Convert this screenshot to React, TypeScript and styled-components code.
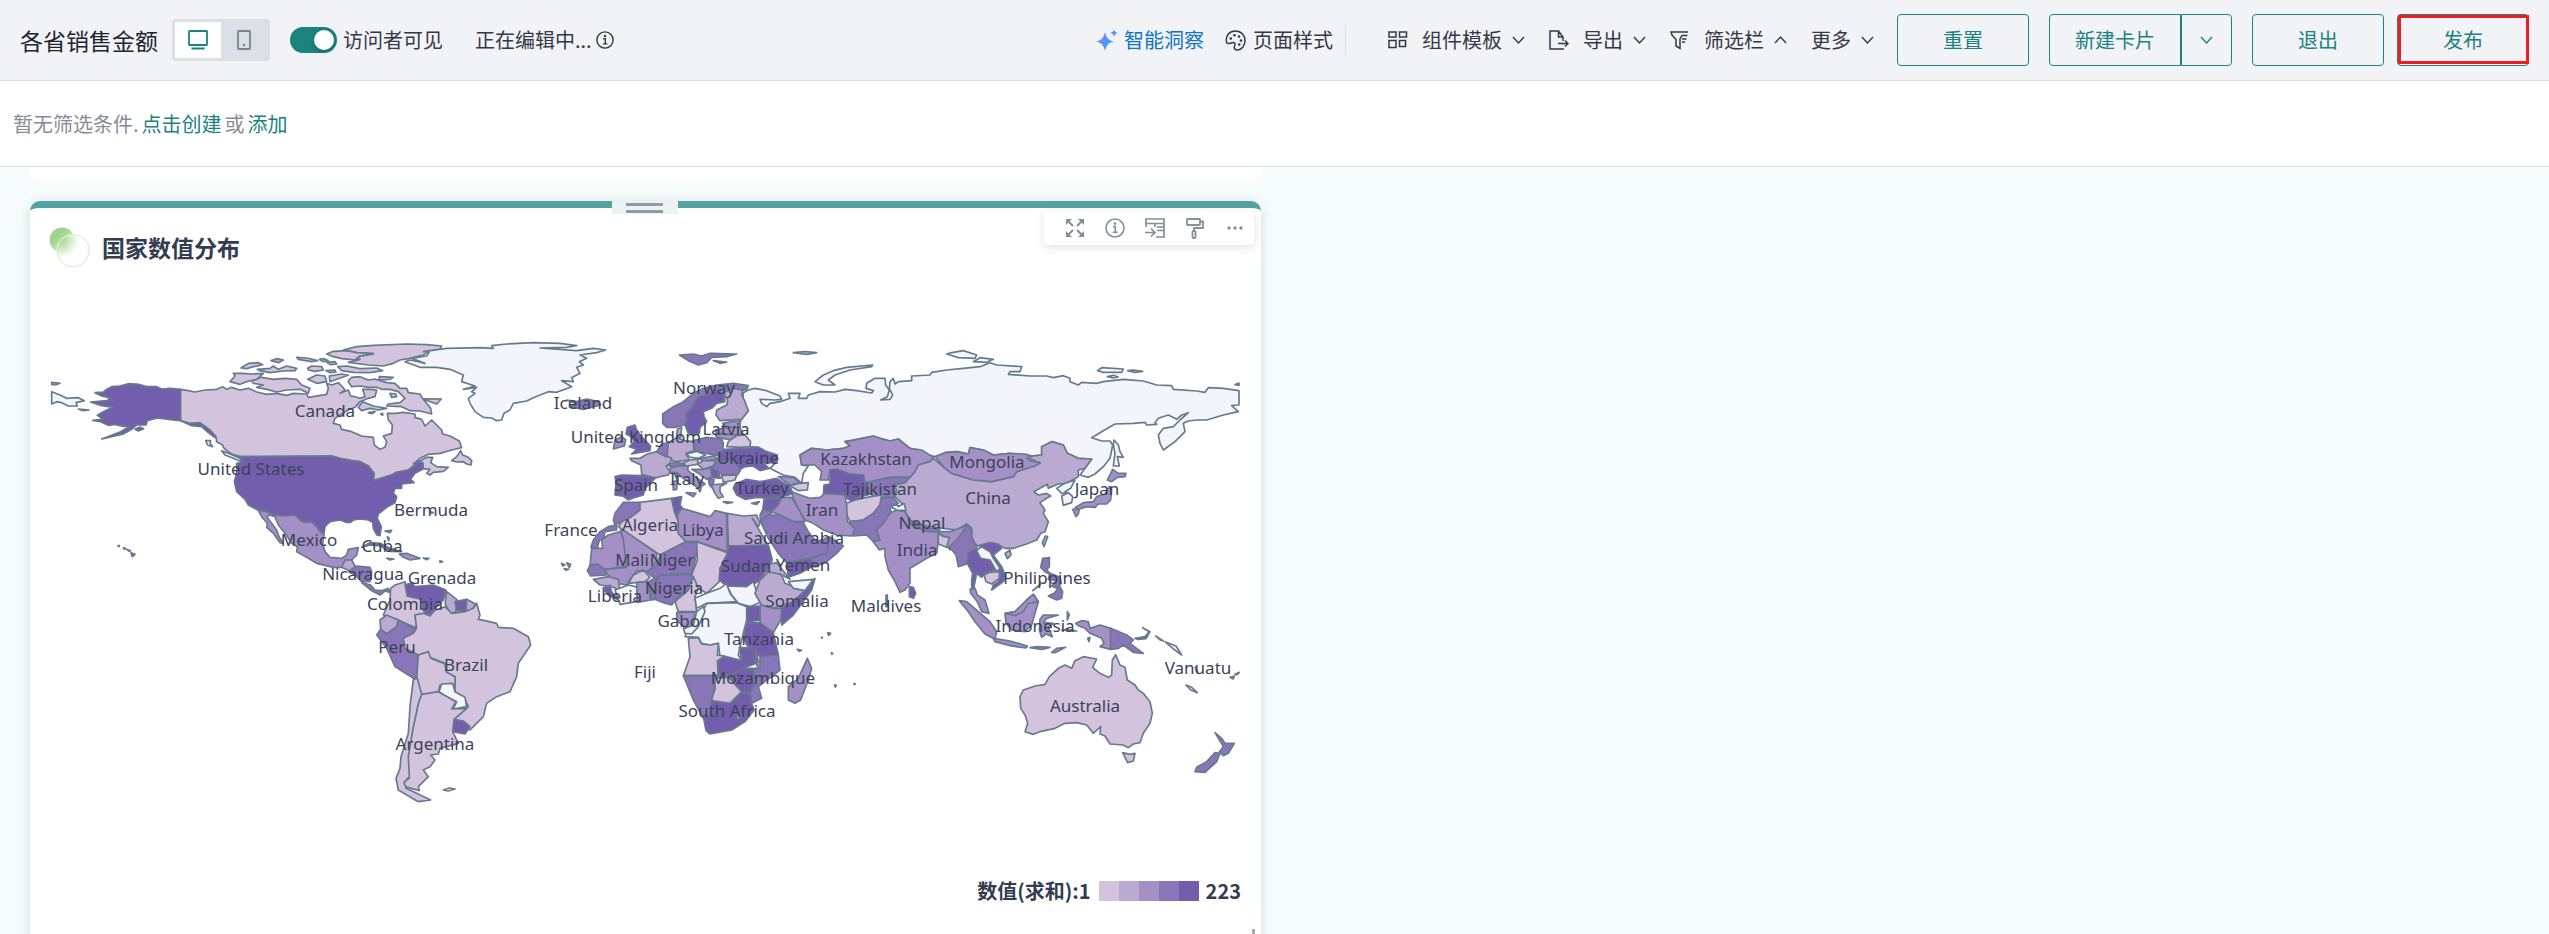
import React from "react";
import styled, { createGlobalStyle } from "styled-components";

const teal = "#1b827d";
const ink = "#343c50";
const iconGray = "#868d9b";

const GlobalStyle = createGlobalStyle`
  * { box-sizing: border-box; }
  body {
    margin: 0;
    color: #343a45;
    font-family: "Noto Sans CJK SC", "Noto Sans", sans-serif;
    font-size: 20px;
    line-height: 30px;
  }
  button, input { font: inherit; }
  h1, h2, p { margin: 0; }
  svg { display: block; flex: none; }
`;

const Page = styled.div`
  display: flex;
  flex-direction: column;
  height: 100vh;
  overflow: hidden;
`;

const Header = styled.header`
  display: flex;
  align-items: center;
  flex: none;
  height: 81px;
  padding: 0 20px;
  background: #f2f3f7;
  border-bottom: 1px solid #dadde3;
  white-space: nowrap;
`;

const PageTitle = styled.h1`
  font-size: 23px;
  font-weight: 400;
  color: #20242c;
`;

const DeviceSwitch = styled.div`
  display: flex;
  margin: 0 20px 0 14px;
  padding: 3px;
  border-radius: 3px;
  background: #dcdfe5;
`;

const DeviceButton = styled.button<{ $active?: boolean }>`
  display: grid;
  place-items: center;
  width: 46px;
  height: 36px;
  padding: 0;
  border: 0;
  border-radius: 2px;
  color: ${(p) => (p.$active ? teal : "#7c828e")};
  background: ${(p) => (p.$active ? "#fff" : "transparent")};
`;

const SwitchLabel = styled.label`
  display: flex;
  align-items: center;
  gap: 6px;
  margin-right: 32px;
`;

const Toggle = styled.input`
  appearance: none;
  display: flex;
  width: 47px;
  height: 26px;
  margin: 0;
  padding: 3px;
  border-radius: 13px;
  background: #a9adb5;
  &::before {
    content: "";
    width: 20px;
    height: 20px;
    border-radius: 50%;
    background: #fff;
    box-shadow: 0 2px 4px rgba(0, 35, 11, 0.2);
  }
  &:checked { background: ${teal}; justify-content: flex-end; }
`;

const Status = styled.p`
  display: flex;
  align-items: center;
  gap: 4px;
`;

const Tools = styled.nav`
  display: flex;
  align-items: center;
  gap: 24px;
  margin-right: 23px;
`;

const QuickTools = styled.div`
  display: flex;
  align-items: center;
  gap: 21px;
  margin-left: auto;
  margin-right: 42px;
  padding-right: 12px;
  height: 30px;
  border-right: 1px solid #dadde3;
`;

const ToolButton = styled.button<{ $gap: number; $blue?: boolean }>`
  display: flex;
  align-items: center;
  gap: ${(p) => p.$gap}px;
  padding: 0;
  border: 0;
  background: none;
  color: ${(p) => (p.$blue ? "#1273c8" : "#343a45")};
`;

const ToolText = styled.span`
  display: flex;
  align-items: center;
  gap: 10px;
`;

const Actions = styled.div`
  display: flex;
  gap: 20px;
`;

const ActionPair = styled.div`
  display: flex;
  gap: 13px;
`;

const SplitButton = styled.div`
  display: flex;
  & > button:first-child { border-radius: 4px 0 0 4px; }
  & > button:last-child { border-radius: 0 4px 4px 0; }
`;

const ActionButton = styled.button<{ $narrow?: boolean; $marked?: boolean }>`
  position: relative;
  display: grid;
  place-items: center;
  width: ${(p) => (p.$narrow ? 51 : 132)}px;
  height: 52px;
  padding: 0;
  border: 1px solid ${teal};
  border-radius: 4px;
  background: transparent;
  color: ${teal};
  &::after {
    content: "";
    display: ${(p) => (p.$marked ? "block" : "none")};
    position: absolute;
    inset: 0 -1px 1px 0;
    border: 3px solid #f31b24;
  }
`;

const FilterBar = styled.div`
  display: flex;
  align-items: center;
  gap: 3px;
  flex: none;
  height: 86px;
  padding: 0 13px;
  background: #fff;
  border-bottom: 1px solid #dadde3;
  color: #868c97;
`;

const FilterLink = styled.a`
  color: ${teal};
  text-decoration: none;
`;

const Canvas = styled.main`
  flex: 1;
  display: grid;
  grid-template-columns: 1fr 1fr;
  grid-template-rows: 14px auto;
  gap: 20px 27px;
  padding: 0 30px;
  overflow: hidden;
  background: #f5fcfb;
`;

const CardTail = styled.div`
  grid-column: 1;
  background: #fff;
  border-radius: 0 0 10px 10px;
`;

const Card = styled.section`
  grid-column: 1;
  position: relative;
  padding: 0 20px 20px;
  border-top: 7px solid #55a39f;
  border-radius: 10px 10px 0 0;
  background: #fff;
  box-shadow: 0 2px 12px rgba(60, 90, 90, 0.18);
`;

const DragHandle = styled.div`
  position: absolute;
  top: -7px;
  left: calc(50% - 34px);
  display: flex;
  flex-direction: column;
  align-items: center;
  justify-content: center;
  gap: 4px;
  width: 66px;
  height: 13px;
  background: #ecf3f3;
  &::before, &::after {
    content: "";
    width: 37px;
    height: 3px;
    background: #9399a6;
  }
`;

const CardTools = styled.div`
  position: absolute;
  top: 3px;
  right: 7px;
  display: flex;
  align-items: center;
  gap: 18px;
  height: 34px;
  padding: 0 8px 0 20px;
  border-radius: 3px;
  background: #fff;
  box-shadow: 0 2px 8px rgba(30, 40, 60, 0.14);
`;

const IconButton = styled.button`
  display: grid;
  place-items: center;
  width: 22px;
  height: 22px;
  padding: 0;
  border: 0;
  background: none;
  color: ${iconGray};
`;

const CardHeader = styled.div`
  display: flex;
  align-items: center;
  gap: 12px;
  height: 40px;
  margin-top: 19px;
`;

const CardTitle = styled.h2`
  font-size: 23px;
  font-weight: 700;
  color: ${ink};
`;

const MapFigure = styled.figure`
  margin: 63px 0 0;
  & > svg { width: 100%; height: auto; }
`;

const MapLabel = styled.text`
  font-family: "Noto Sans", sans-serif;
  font-size: 17px;
  fill: #3c4358;
  text-anchor: middle;
`;

const Legend = styled.div`
  display: flex;
  align-items: center;
  justify-content: flex-end;
  height: 20px;
  margin-top: 61px;
  font-weight: 700;
  color: ${ink};
`;

const Swatches = styled.div`
  display: flex;
  margin: 0 7px 0 8px;
`;

const Swatch = styled.span<{ $color: string }>`
  width: 20px;
  height: 20px;
  background: ${(p) => p.$color};
`;

const ResizeGrip = styled.div`
  width: 3px;
  height: 12px;
  margin: 28px -14px 0 auto;
  background: #a5a9b0;
`;

const Chevron = ({ up }: { up?: boolean }) => (
  <svg width="13" height="14" viewBox="0 0 13 14" fill="none" stroke="currentColor" strokeWidth="1.4">
    <path d={up ? "M1 10l5.5-6L12 10" : "M1 4l5.5 6L12 4"} />
  </svg>
);

const InfoIcon = ({ size }: { size: number }) => (
  <svg width={size} height={size} viewBox="0 0 20 20" fill="none" stroke="currentColor" strokeWidth="1.6">
    <circle cx="10" cy="10" r="9" />
    <path d="M8 8.6h2.3V14M7.7 14.3h5" />
    <circle cx="10" cy="5.6" r="0.6" fill="currentColor" />
  </svg>
);

const TONES: Record<string, string> = {
  n: "#f3f5fa",
  1: "#d3c3dc",
  2: "#baa9d0",
  3: "#a490c6",
  4: "#8976b9",
  5: "#735eae",
};

type Region = { origin: [number, number]; shapes: [string, string][] };

// Outlines are stored at three units per map pixel, relative to each region's origin.
const REGIONS: Region[] = [
  {
    // Eurasia
    origin: [830, 340],
    shapes: [
      ["n", "-245,150 -225,145 -190,152 -150,168 -145,178 -165,180 -210,178 -205,190 -190,200 -180,190 -150,185 -120,175 -125,160 -90,160 -95,175 -70,175 -65,165 -30,155 15,156 45,148 80,152 125,159 130,152 108,145 110,130 135,115 165,115 167,135 178,150 172,170 152,180 180,178 188,165 178,145 180,125 190,115 195,132 205,125 245,122 245,108 300,105 305,97 350,90 400,85 450,80 480,68 500,75 575,80 570,95 540,95 535,103 600,108 650,108 670,113 700,107 720,115 720,125 745,135 755,127 800,130 820,125 880,118 940,123 980,135 1025,137 1030,148 1100,153 1125,157 1135,143 1180,145 1227,152 1227,195 1205,197 1225,215 1180,225 1130,240 1100,240 1075,243 1060,250 1065,275 1050,290 1035,305 1000,330 990,310 985,285 1000,265 1030,260 1050,240 1075,218 1055,225 1040,238 1015,225 985,235 975,248 980,253 950,255 945,247 910,250 855,252 820,272 785,293 815,303 840,303 848,315 840,355 820,380 795,402 775,412 750,405 765,385 785,357 745,355 712,340 700,315 665,305 635,320 635,345 590,350 540,340 490,345 460,330 420,323 415,342 380,335 345,338 315,350 275,340 240,325 205,297 180,303 150,295 130,288 45,305 60,318 40,325 -10,330 -55,325 -90,345 -85,375 -65,378 -80,400 -85,430 -105,412 -140,405 -160,395 -180,385 -160,365 -165,345 -195,335 -215,322 -240,320 -240,305 -260,283 -270,270 -270,243 -245,212 -262,185 -260,158"],
      ["n", "-45,125 -20,105 10,92 50,82 128,75 125,80 60,90 15,105 -5,120 15,135 -20,135"],
      ["n", "350,42 365,38 400,32 440,45 435,55 385,53"],
      ["n", "430,65 450,53 490,58 470,67"],
      ["n", "803,92 815,83 880,87 875,97 820,97"],
      ["n", "893,92 910,90 938,94 915,97"],
      ["n", "832,110 850,106 865,111 850,114"],
      ["n", "1215,134 1227,129 1227,136"],
      ["n", "852,300 865,315 870,335 880,352 862,350 868,378 850,378 855,340 850,315"],
      ["3", "-90,345 -55,325 -10,330 40,325 60,318 45,305 75,300 130,288 150,295 180,303 205,297 240,325 275,330 310,352 300,365 265,375 255,395 240,412 180,412 150,420 130,428 105,435 100,405 60,402 20,388 0,390 -5,420 -30,420 -25,395 -45,375 -85,375"],
      ["5", "0,390 20,388 60,402 100,405 105,428 150,420 150,440 130,460 90,470 70,485 50,475 40,462 -20,468 -18,435 0,432"],
      ["4", "105,430 150,418 180,412 240,412 225,428 190,437 200,470 150,475 125,465"],
      ["1", "50,490 75,480 110,472 155,465 150,495 130,520 100,540 60,545 48,520"],
      ["4", "60,545 100,540 130,520 150,495 155,475 190,472 205,490 180,505 185,520 160,550 145,565 150,600 130,605 110,585 70,588 65,570"],
      ["2", "310,355 345,385 365,400 430,420 485,425 550,410 560,395 605,375 630,370 590,350 635,345 635,320 665,305 700,315 712,340 745,355 785,357 765,385 745,390 745,410 710,430 685,432 655,445 652,433 630,445 612,455 625,465 650,460 662,468 645,478 630,488 645,510 640,520 655,545 645,575 632,580 620,600 590,612 550,625 525,625 500,612 480,608 450,620 435,612 425,590 425,565 410,552 380,570 340,565 290,558 240,540 222,510 215,490 195,470 200,450 190,437 225,428 240,412 255,395 265,375 300,365"],
      ["3", "315,350 345,338 380,335 415,342 420,323 460,330 490,345 540,340 590,343 605,348 590,355 600,362 630,368 615,378 560,395 550,410 485,425 430,420 365,400 345,385"],
      ["3", "200,510 225,515 240,545 290,570 330,575 360,575 415,555 420,570 390,590 370,610 360,630 345,610 345,590 325,580 325,605 320,640 290,655 262,672 240,685 240,730 225,750 210,757 195,725 175,690 165,650 165,625 148,630 130,605 150,600 140,570 160,550 180,520"],
      ["n", "182,500 200,492 205,500 222,490 228,512 200,510"],
      ["1", "325,580 340,590 358,592 350,622 325,612"],
      ["4", "235,540 290,562 330,570 325,576 290,574 245,555"],
      ["5", "238,740 250,742 257,760 250,775 238,770"],
      ["5", "168,765 172,765 172,800 168,800"],
      ["2", "525,640 540,630 543,645 532,656"],
      ["2", "637,608 646,588 653,590 642,620"],
      ["4", "410,555 425,570 425,590 435,612 442,625 415,640 415,660 410,672 385,680 378,645 358,620 380,600 395,580"],
      ["5", "415,640 435,628 455,650 480,655 495,690 465,700 455,712 440,700 432,740 440,765 425,750 425,720 428,700 412,670"],
      ["5", "450,615 480,608 505,612 515,625 490,645 515,680 527,710 520,725 485,750 490,735 505,725 510,695 490,655 475,635"],
      ["n", "440,632 455,620 480,635 490,655 510,685 500,695 480,660 452,655"],
      ["1", "462,705 480,697 508,695 508,715 485,732 468,725"],
      ["n", "680,445 700,432 735,420 722,445 705,455 715,460 695,460"],
      ["n", "695,468 715,458 728,470 725,488 700,496"],
      ["3", "838,440 845,450 842,480 830,492 805,492 795,502 770,500 745,508 735,503 760,488 790,485 800,470 825,462"],
      ["3", "832,420 848,388 865,400 888,400 885,410 862,412 845,425"],
      ["3", "728,508 748,508 745,522 738,530"],
      ["4", "638,655 658,653 658,680 650,690 665,705 645,695 632,682"],
      ["4", "672,760 690,740 698,755 695,775 680,780 655,768"],
      ["n", "608,752 632,732 625,740"],
      ["4", "660,700 690,712 694,730 680,745 665,738 680,722 655,718"],
    ],
  },
  {
    // Europe and the Middle East
    origin: [560, 340],
    shapes: [
      ["4", "358,45 400,42 425,48 450,40 530,42 500,50 455,52 440,68 415,75 385,62"],
      ["4", "460,62 500,66 480,70"],
      ["n", "700,38 735,35 770,38 740,43"],
      ["4", "308,222 340,200 370,185 400,160 430,145 470,135 520,130 565,137 560,148 545,152 525,145 500,155 470,150 440,165 415,172 395,205 378,220 380,240 372,255 345,262 320,262 308,250"],
      ["5", "470,150 490,160 495,185 470,190 455,205 430,215 432,230 440,245 420,262 418,280 400,283 385,280 375,255 380,240 378,220 395,205 415,170 440,165"],
      ["2", "490,158 520,145 548,150 545,165 555,185 565,212 545,238 480,242 468,225 470,210 500,195 503,182"],
      ["3", "488,250 515,245 542,243 538,262 500,262"],
      ["3", "465,270 500,262 540,262 548,285 470,280"],
      ["3", "465,282 545,285 515,300 470,292"],
      ["1", "500,320 505,305 530,287 555,285 572,305 570,320 540,322"],
      ["4", "400,302 440,292 485,297 490,310 488,335 470,347 405,332"],
      ["2", "322,310 350,292 372,302 400,305 402,332 378,340 388,360 345,365 322,355"],
      ["2", "352,268 365,262 362,292 350,290"],
      ["n", "378,342 410,334 437,345 415,355 392,352"],
      ["3", "418,356 460,348 475,358 430,363"],
      ["1", "362,372 390,360 415,358 412,373 380,378"],
      ["2", "412,372 430,362 468,362 460,378 430,388"],
      ["5", "475,340 490,328 560,325 595,322 620,335 652,345 650,365 612,372 628,385 600,392 580,378 555,380 540,388 520,363 475,365"],
      ["4", "455,385 472,365 520,363 542,390 532,405 490,405 470,395"],
      ["1", "485,406 530,405 525,420 490,427"],
      ["5", "450,382 472,392 482,415 455,412"],
      ["3", "395,388 430,388 452,384 455,410 440,418 415,400"],
      ["4", "445,415 462,418 458,445 448,435"],
      ["2", "455,435 500,430 480,440 480,455 490,470 475,475 462,455"],
      ["n", "490,485 518,487 500,490"],
      ["4", "575,490 598,485 590,493"],
      ["4", "318,375 345,366 375,372 350,382 335,380"],
      ["3", "330,385 355,377 385,378 383,390 405,410 435,432 425,438 420,455 410,440 390,428 370,415 350,398 330,398"],
      ["3", "338,425 352,422 350,448 340,450"],
      ["2", "344,402 350,400 350,418"],
      ["3", "378,458 408,460 400,470"],
      ["2", "210,355 240,355 262,342 290,335 310,345 335,355 330,370 318,378 330,395 325,405 300,410 285,415 245,403 243,375 215,362"],
      ["4", "290,335 305,312 325,308 322,335 318,350"],
      ["5", "165,410 185,405 245,407 287,413 270,430 255,445 250,465 225,472 205,480 185,465 188,430 168,428"],
      ["5", "168,428 188,430 185,468 165,465"],
      ["5", "202,262 225,255 230,270 245,290 272,318 270,332 215,342 230,328 208,320 222,305 215,290 198,282"],
      ["3", "165,300 185,290 197,300 193,318 160,327"],
      ["5", "525,432 560,418 600,425 650,415 690,440 700,462 660,470 625,475 590,472 555,478 530,465 520,445"],
      ["3", "655,410 700,412 720,428 690,435"],
      ["1", "690,437 715,430 745,428 742,450 715,452"],
      ["5", "612,478 665,472 655,495 625,518 608,512"],
      ["4", "600,525 608,510 640,515 622,530 602,545"],
      ["3", "665,472 695,472 715,505 735,545 700,545 660,525 635,515 655,495"],
      ["4", "602,545 625,525 660,525 700,545 730,548 745,575 760,595 775,605 805,612 800,640 750,655 700,665 680,668 655,640 625,595"],
      ["5", "680,668 700,665 750,655 765,675 720,700 685,712"],
      ["4", "770,605 808,590 850,618 830,640 800,665 765,680 752,655 800,640 805,612"],
      ["3", "695,455 730,468 750,475 780,472 795,460 855,465 860,500 862,545 885,565 875,588 830,585 790,570 760,550 735,540 715,505 700,475"],
    ],
  },
  {
    // Africa
    origin: [560, 540],
    shapes: [
      ["4", "160,-60 165,-80 190,-113 240,-113 240,-90 215,-70 185,-55 165,-45"],
      ["4", "93,22 100,0 120,-25 145,-40 170,-45 170,-30 135,-25 130,0 118,0 112,25"],
      ["3", "95,25 128,25 125,0 145,-15 180,-25 195,0 200,80 135,88 110,72 90,76"],
      ["3", "180,-40 290,40 290,65 265,95 230,92 205,125 205,135 165,130 140,100 135,88 200,82 190,0"],
      ["1", "240,-113 335,-125 345,-80 355,-55 355,-20 378,5 300,45 175,-40 185,-55 215,-70 240,-90"],
      ["5", "335,-125 365,-130 360,-105 368,-95 350,-75 342,-90"],
      ["3", "365,-95 400,-85 450,-70 465,-88 500,-80 502,35 410,5 378,5 355,-20 355,-55 352,-75"],
      ["2", "502,-80 550,-72 590,-75 600,-50 595,-40 577,-65 600,-25 625,17 505,18"],
      ["4", "300,45 378,5 410,10 412,30 400,85 395,100 300,105 290,120 260,95 290,75"],
      ["1", "410,5 502,38 500,60 480,85 478,125 440,160 415,145 395,105 412,60"],
      ["5", "505,18 625,15 637,60 620,90 600,120 585,130 560,138 500,138 478,120 480,85 502,40"],
      ["4", "290,120 300,105 395,103 402,125 385,150 355,170 335,195 310,188 285,178"],
      ["1", "400,110 415,145 405,170 410,215 355,215 345,185 385,150"],
      ["n", "405,175 440,160 480,145 500,130 510,160 530,185 480,188 440,190 410,205"],
      ["n", "502,138 560,140 580,125 590,155 605,185 570,200 535,190 515,165"],
      ["2", "585,160 600,120 630,92 665,105 675,130 735,152 700,185 670,195 640,205 605,195 590,170"],
      ["2", "620,95 630,72 650,68 690,118 660,102"],
      ["n", "685,125 760,118 735,152 700,145"],
      ["5", "765,115 755,150 700,225 665,255 660,205 700,185 735,152"],
      ["3", "600,195 640,205 665,205 662,240 640,278 600,250"],
      ["5", "560,200 600,198 600,240 550,248"],
      ["5", "560,248 600,248 640,278 655,345 600,350 560,315 550,290"],
      ["n", "440,190 530,188 560,200 560,240 545,300 535,345 545,362 480,350 475,310 450,315 425,310 415,292 375,290 380,275 410,262 425,220"],
      ["n", "410,215 430,200 435,215 415,260 395,282 375,280 370,265 400,255"],
      ["3", "350,218 405,216 400,255 375,265 350,240"],
      ["1", "385,295 415,293 425,312 450,315 475,310 472,345 492,348 490,360 472,362 475,407 370,407 390,350"],
      ["5", "475,362 492,348 545,362 538,322 585,325 590,370 550,385 530,405 475,403"],
      ["3", "588,330 595,365 608,375 600,395 590,375"],
      ["4", "600,350 655,345 660,390 615,425 595,440 605,475 575,490 570,460 580,440 585,410 560,385 600,385"],
      ["5", "505,410 550,385 582,390 582,435 570,458 545,455"],
      ["1", "465,415 505,412 545,455 510,490 470,490 455,480 458,455 465,450"],
      ["4", "370,407 510,407 465,415 462,455 455,480 450,525 430,535 400,480"],
      ["5", "430,530 450,525 455,482 510,490 545,458 570,460 575,490 582,510 555,545 515,570 450,582 438,572"],
      ["3", "527,530 540,522 545,530 533,540"],
      ["3", "742,355 755,385 745,420 722,480 705,490 685,480 685,440 715,415"],
      ["4", "82,92 90,76 112,73 135,88 140,105 92,108"],
      ["2", "100,118 145,110 175,118 180,150 155,140 120,135"],
      ["5", "128,145 150,135 155,155 175,180 145,165"],
      ["n", "165,150 205,135 235,142 230,185 180,193"],
      ["1", "205,130 220,105 250,90 270,112 255,125"],
      ["3", "230,128 262,125 272,180 232,187"],
      ["4", "265,125 290,112 285,178 275,180"],
      ["n", "5,70 15,75 8,78"],
      ["n", "20,68 32,73 28,83"],
      ["n", "12,86 26,88 18,91"],
      ["5", "803,278 812,280 806,286"],
      ["n", "784,292 787,292 786,295"],
      ["n", "814,338 818,340 816,343"],
      ["3", "712,328 725,331 718,334"],
      ["5", "823,435 829,436 826,441"],
      ["n", "882,430 886,432 883,434"],
    ],
  },
  {
    // North America
    origin: [40, 330],
    shapes: [
      ["n", "35,185 60,195 80,205 115,203 133,212 108,218 112,228 85,228 65,218 50,215 35,222"],
      ["n", "35,157 60,160 48,164 35,164"],
      ["5", "115,237 147,240 130,242"],
      ["5", "422,178 390,175 365,177 350,170 320,170 296,163 268,161 238,168 215,170 200,178 190,186 165,188 185,198 212,204 200,212 152,216 180,226 220,232 205,238 190,245 172,256 190,268 158,271 182,275 205,286 225,283 250,289 268,290 240,306 185,327 215,320 250,312 275,298 290,285 318,285 322,272 352,264 385,268 422,272"],
      ["5", "422,272 450,280 480,278 510,296 530,314 525,323 505,308 485,290 455,287"],
      ["5", "285,298 300,291 311,296 295,303"],
      ["1", "422,178 445,182 465,186 495,180 530,178 548,170 560,178 575,172 600,180 625,175 650,186 680,193 710,190 740,196 760,190 800,192 805,202 860,193 865,175 860,160 875,165 895,158 905,168 915,180 900,190 925,180 932,198 945,200 960,205 975,200 968,178 990,178 1010,180 1005,200 985,205 960,215 945,232 925,240 900,255 885,265 880,280 900,285 905,298 935,305 965,318 1000,322 1003,345 1020,358 1035,352 1040,335 1030,318 1055,310 1057,285 1045,270 1042,250 1065,250 1090,247 1125,252 1125,262 1145,268 1155,288 1175,270 1205,300 1208,312 1230,318 1258,333 1265,353 1235,360 1200,370 1165,373 1140,385 1120,402 1145,390 1160,382 1178,382 1172,398 1190,410 1225,412 1210,424 1180,427 1170,435 1160,430 1170,418 1150,416 1148,398 1135,396 1125,405 1105,420 1070,427 1050,437 1000,452 1002,430 985,408 960,395 935,392 900,385 875,378 600,380 575,372 560,362 550,352 548,345 530,335 528,320 510,300 480,278 450,280 422,272"],
      ["n", "545,362 565,370 600,385 605,395 580,385 555,375"],
      ["n", "497,332 512,332 510,340 518,350 503,345"],
      ["1", "1235,392 1250,380 1262,362 1268,375 1285,382 1295,392 1293,405 1280,402 1270,395 1250,396"],
      ["1", "928,148 935,142 960,140 985,150 1005,147 1040,158 1065,160 1080,175 1100,175 1105,188 1140,192 1148,206 1204,207 1190,222 1150,208 1172,235 1175,252 1140,243 1110,242 1085,230 1040,228 1045,222 1080,218 1095,205 1075,185 1050,178 1025,178 1010,172 985,172 960,168 935,170 925,155"],
      ["1", "910,60 950,50 1000,46 1100,42 1160,44 1205,48 1200,58 1165,65 1150,75 1110,85 1080,90 1060,100 1030,108 985,105 925,97 960,88 920,86 1000,72 950,68"],
      ["1", "860,72 880,64 920,62 950,68 1000,70 960,78 945,90 905,86 880,80"],
      ["1", "893,110 920,108 960,116 1010,114 1028,122 990,128 940,127 905,122"],
      ["1", "635,152 665,142 700,148 735,145 770,148 785,165 810,175 805,190 780,178 740,180 710,186 680,178 650,172 670,165 640,160"],
      ["1", "570,155 585,138 580,130 605,130 640,132 670,130 650,148 620,155 600,163"],
      ["1", "652,118 690,115 700,108 715,118 740,108 770,115 765,122 730,123 690,128 660,122"],
      ["1", "603,114 625,100 655,98 668,104 640,110 620,116"],
      ["2", "693,92 712,86 730,90 715,98"],
      ["1", "770,82 800,84 833,92 815,95 775,88"],
      ["1", "803,115 815,108 845,110 850,120 825,124 805,120"],
      ["1", "838,88 852,86 865,92 850,95"],
      ["1", "860,97 885,95 890,102 872,104"],
      ["1", "803,148 830,135 855,138 860,155 830,160"],
      ["1", "868,138 905,132 925,136 890,148 870,155"],
      ["1", "858,122 885,120 888,126 870,128"],
      ["1", "955,232 968,215 1000,228 1040,235 1015,240 990,235 965,242"],
      ["2", "985,248 1005,245 995,251"],
      ["2", "1022,252 1028,250 1028,256"],
      ["1", "1050,190 1068,192 1070,200 1055,202"],
      ["1", "1018,140 1060,142 1050,148 1018,150"],
      ["5", "600,380 875,378 900,385 935,392 960,395 985,408 1002,430 1000,452 1050,437 1070,427 1105,420 1125,405 1135,396 1148,398 1150,416 1125,430 1112,448 1122,458 1085,462 1085,475 1065,475 1060,490 1070,500 1065,518 1040,532 1015,552 1012,565 1024,590 1020,617 1010,615 1000,595 998,577 985,570 960,567 940,570 932,577 918,577 900,570 870,575 855,590 852,612 840,605 830,590 815,575 795,578 780,570 765,555 735,558 700,555 680,545 655,541 625,525 615,508 590,485 583,455 590,430 590,400 605,398"],
      ["3", "655,541 680,545 700,555 735,558 765,555 780,570 795,578 815,575 830,590 840,605 852,612 848,640 855,665 870,682 905,685 920,675 925,658 955,653 950,675 935,690 915,690 912,700 905,712 880,712 830,700 800,682 770,665 772,650 755,640 735,610 715,585 705,560 690,555 680,560 695,580 710,600 718,622 730,640 720,638 700,610 680,592 682,580 665,560"],
      ["2", "905,712 915,690 935,690 945,708 935,725"],
      ["4", "925,725 950,708 990,712 995,725 990,755 965,755 945,735"],
      ["4", "965,758 992,765 1005,780 1025,782 1045,775 1053,788 1035,783 1020,795 995,782"],
      ["5", "965,652 990,638 1020,640 1050,655 1085,665 1050,664 1020,648 990,645"],
      ["3", "1040,685 1062,687 1050,690"],
      ["3", "1078,672 1100,670 1140,685 1110,690 1090,682"],
      ["3", "1150,684 1167,685 1160,689"],
      ["n", "1035,603 1055,601 1050,608"],
      ["n", "1042,620 1048,625 1046,632"],
      ["n", "1200,692 1208,695 1200,697"],
      ["n", "1170,545 1180,548 1174,550"],
      ["5", "234,647 238,647 237,650"],
      ["5", "250,653 256,655 253,658"],
      ["5", "260,658 272,662 268,664"],
      ["5", "273,668 285,673 277,680"],
    ],
  },
  {
    // Greenland and Iceland
    origin: [300, 330],
    shapes: [
      ["n", "440,55 540,53 580,55 575,47 620,42 700,38 780,40 830,47 800,52 720,54 830,62 880,55 917,60 890,68 840,75 860,85 838,95 850,105 830,112 840,130 815,143 820,155 785,152 815,170 770,187 745,185 700,203 680,213 640,220 630,240 612,250 605,270 590,272 575,264 550,262 525,245 510,220 505,205 525,190 515,185 530,172 490,178 525,168 485,155 490,135 450,118 410,112 360,112 315,95 330,90 355,95 375,100 335,85 380,78 390,62 370,65"],
      ["4", "800,210 830,215 860,207 895,215 902,225 870,233 850,238 808,230 830,222"],
    ],
  },
  {
    // South America
    origin: [320, 560],
    shapes: [
      ["1", "212,85 225,75 255,65 262,90 262,108 310,118 320,160 285,165 288,190 290,205 235,180 190,165 210,120"],
      ["5", "255,75 275,68 285,80 340,75 378,90 370,120 345,145 340,160 320,168 310,150 305,118 262,108"],
      ["2", "380,95 410,118 408,155 390,162 375,130"],
      ["5", "405,125 440,118 438,155 410,152"],
      ["2", "440,118 467,132 455,152 438,152"],
      ["2", "180,180 200,165 235,180 230,200 200,222 182,208"],
      ["4", "170,225 182,208 200,222 230,200 235,180 270,200 287,205 280,220 250,235 255,265 295,285 292,330 285,358 225,320 200,265"],
      ["1", "285,165 310,160 330,168 345,150 375,140 395,160 435,155 460,145 470,130 480,165 475,178 495,182 530,190 535,202 580,205 625,230 632,255 595,310 590,350 570,395 530,410 500,430 490,470 450,510 405,475 445,440 430,410 405,400 405,350 375,335 375,310 325,290 325,275 295,285 255,265 250,235 280,220 290,205"],
      ["1", "295,285 325,275 332,295 375,312 378,335 405,350 405,380 360,375 355,398 340,402 305,403 290,355"],
      ["n", "357,395 365,372 398,370 405,395 435,412 440,440 400,447 410,425 375,408"],
      ["5", "402,478 430,483 450,500 435,522 398,515"],
      ["1", "305,403 355,395 408,425 395,447 440,445 402,478 398,515 415,550 360,565 355,582 332,585 345,600 330,620 310,630 325,650 295,680 298,692 255,680 250,665 268,655 260,600 280,500 295,430"],
      ["1", "280,358 292,355 305,403 295,430 280,500 265,590 268,650 252,668 258,685 290,700 332,720 295,725 235,690 228,655 240,625 243,590 265,520 270,440"],
      ["n", "370,690 388,684 405,687 385,693"],
    ],
  },
  {
    // Oceania and Indonesia
    origin: [900, 560],
    shapes: [
      ["3", "178,122 200,125 235,155 270,185 290,215 285,238 255,222 225,185 205,155"],
      ["3", "210,88 225,85 232,105 255,120 267,160 245,155 232,125 212,100"],
      ["3", "315,160 345,155 365,135 385,115 400,103 415,125 405,160 395,195 375,215 335,210 318,190"],
      ["3", "318,160 345,155 365,135 385,115 400,103 415,125 385,130 370,155 345,167"],
      ["3", "280,235 330,243 382,258 378,264 330,257 285,245"],
      ["3", "420,178 430,165 475,165 440,175 430,188 460,190 445,203 457,230 438,222 425,232 418,210"],
      ["3", "502,155 508,165 502,180"],
      ["3", "390,263 412,260 450,262 425,268"],
      ["3", "455,277 470,265 497,262 465,278"],
      ["n", "485,210 505,208 530,213 510,213"],
      ["3", "563,235 570,232 567,245"],
      ["3", "527,190 545,182 565,185 570,205 600,195 632,205 632,268 600,260 612,250 605,235 570,220 555,205 535,197"],
      ["4", "632,205 680,225 700,240 690,250 730,280 700,277 670,255 655,265 632,268"],
      ["4", "705,235 735,230 748,215 728,203 750,215 738,236 715,238"],
      ["n", "767,228 790,243 780,240"],
      ["n", "795,245 828,258 845,285 822,268"],
      ["n", "886,322 895,340 890,335"],
      ["n", "858,375 875,382 892,398 872,390"],
      ["3", "990,352 1003,348 1000,357"],
      ["3", "1005,343 1018,337 1010,345"],
      ["1", "360,410 370,390 405,378 435,373 448,350 475,325 495,315 515,325 525,302 550,290 590,297 578,322 600,340 625,352 635,345 637,300 647,284 660,315 675,322 682,360 705,375 715,390 730,400 750,425 757,460 750,490 730,520 720,548 700,552 685,563 670,555 630,552 615,528 600,522 602,500 580,520 560,495 530,488 495,490 465,505 420,515 400,523 375,515 383,490 375,465 362,445"],
      ["1", "668,578 690,583 705,580 700,603 683,608"],
      ["4", "945,518 965,535 975,550 1003,550 985,580 970,587 958,575 970,560"],
      ["4", "945,578 960,580 950,605 915,637 885,635 890,622 920,605"],
    ],
  },
];

const LABELS: [string, number, number][] = [
  ["Canada", 325, 417], ["United States", 251, 475], ["Bermuda", 431, 516],
  ["Mexico", 309, 546], ["Cuba", 382, 552], ["Nicaragua", 363, 580],
  ["Grenada", 442, 584], ["Colombia", 405, 610], ["Peru", 397, 653],
  ["Brazil", 466, 671], ["Argentina", 435, 750], ["Iceland", 583, 409],
  ["France", 571, 536], ["Norway", 704, 394], ["United Kingdom", 636, 443],
  ["Latvia", 726, 435], ["Ukraine", 748, 464], ["Spain", 636, 491],
  ["Italy", 687, 485], ["Turkey", 762, 494], ["Iran", 822, 516],
  ["Algeria", 650, 531], ["Libya", 703, 536], ["Saudi Arabia", 794, 544],
  ["Mali", 632, 566], ["Niger", 672, 566], ["Sudan", 746, 572],
  ["Yemen", 803, 571], ["Nigeria", 674, 594], ["Liberia", 615, 602],
  ["Gabon", 684, 627], ["Somalia", 797, 607], ["Tanzania", 759, 645],
  ["Fiji", 645, 678], ["Mozambique", 763, 684], ["South Africa", 727, 717],
  ["Kazakhstan", 866, 465], ["Mongolia", 987, 468], ["China", 988, 504],
  ["Tajikistan", 880, 495], ["Japan", 1097, 495], ["Nepal", 922, 529],
  ["India", 917, 556], ["Philippines", 1047, 584], ["Maldives", 886, 612],
  ["Indonesia", 1035, 632], ["Australia", 1085, 712], ["Vanuatu", 1198, 674],
];

const WorldMap = () => (
  <svg viewBox="50 330 1191 490" role="img" aria-label="国家数值分布">
    {REGIONS.map((region) => (
      <g
        key={region.origin.join()}
        transform={`translate(${region.origin.join()}) scale(${1 / 3})`}
        stroke="#667a8e"
        strokeWidth="5"
        strokeLinejoin="round"
      >
        {region.shapes.map(([tone, points], i) => (
          <polygon key={i} points={points} fill={TONES[tone]} />
        ))}
      </g>
    ))}
    {LABELS.map(([name, x, y]) => (
      <MapLabel key={name} x={x} y={y}>{name}</MapLabel>
    ))}
  </svg>
);

const CardLogo = () => (
  <svg width="40" height="40" viewBox="0 0 40 40">
    <defs>
      <linearGradient id="leaf" x1="0.1" y1="0.1" x2="0.8" y2="0.9">
        <stop offset="0.3" stopColor="#9fd48c" />
        <stop offset="1" stopColor="#d9f0cf" />
      </linearGradient>
      <radialGradient id="lens" cx="0.1" cy="0.15" r="0.6">
        <stop offset="0.2" stopColor="#b0dd9f" />
        <stop offset="1" stopColor="#ffffff" />
      </radialGradient>
    </defs>
    <circle cx="12" cy="13" r="12.5" fill="url(#leaf)" />
    <circle cx="23" cy="23.5" r="16" fill="url(#lens)" stroke="#dcefd2" strokeWidth="1.2" />
  </svg>
);

export default function App() {
  return (
    <Page>
      <GlobalStyle />
      <Header>
        <PageTitle>各省销售金额</PageTitle>
        <DeviceSwitch>
          <DeviceButton $active aria-label="桌面端">
            <svg width="20" height="20" viewBox="0 0 20 20" fill="none" stroke="currentColor" strokeWidth="1.8">
              <rect x="1" y="1" width="18" height="14" rx="0.5" />
              <path d="M3.5 18.5h13" strokeWidth="2" />
            </svg>
          </DeviceButton>
          <DeviceButton aria-label="移动端">
            <svg width="14" height="20" viewBox="0 0 14 20" fill="none" stroke="currentColor" strokeWidth="1.8">
              <rect x="1" y="1" width="12" height="18" rx="0.5" />
              <circle cx="7" cy="15" r="1.2" fill="currentColor" stroke="none" />
            </svg>
          </DeviceButton>
        </DeviceSwitch>
        <SwitchLabel>
          <Toggle type="checkbox" defaultChecked />
          访问者可见
        </SwitchLabel>
        <Status>
          正在编辑中...
          <InfoIcon size={18} />
        </Status>
        <QuickTools>
          <ToolButton $gap={6} $blue>
            <svg width="22" height="22" viewBox="0 0 22 22">
              <defs>
                <linearGradient id="spark" x1="0" y1="0" x2="1" y2="1">
                  <stop offset="0" stopColor="#8a7bf7" />
                  <stop offset="0.6" stopColor="#4a9bfb" />
                  <stop offset="1" stopColor="#35a8fb" />
                </linearGradient>
              </defs>
              <path fill="url(#spark)" d="M9 3c1.500 6 3.200 8 9 9.500-5.800 1.500-7.500 3.500-9 9.500-1.500-6-3.200-8-9-9.500 5.800-1.500 7.500-3.500 9-9.500z" />
              <path fill="url(#spark)" d="M18 0c.6 2.600 1.400 3.500 4 4-2.600.5-3.400 1.500-4 4-.6-2.500-1.400-3.500-4-4 2.600-.5 3.400-1.400 4-4z" />
            </svg>
            智能洞察
          </ToolButton>
          <ToolButton $gap={7}>
            <svg width="21" height="21" viewBox="0 0 21 21" fill="none" stroke="currentColor" strokeWidth="1.5">
              <path d="M1.5 12C.2 5.500 4.800 1 10.500 1S20 5.200 20 10.500 16.500 20 12.500 20c-2.300 0-3.700-1.200-3.200-3 .5-1.700 1.300-2.600.4-3.800-.8-1.100-2.200-.9-3.900-.2-1.800.8-3.800 1-4.300-1z" />
              <g fill="currentColor" stroke="none">
                <circle cx="5.8" cy="8.5" r="1.3" />
                <circle cx="9.5" cy="5.2" r="1.3" />
                <circle cx="14" cy="6.5" r="1.3" />
                <circle cx="16" cy="10.5" r="1.3" />
                <circle cx="14.2" cy="14.5" r="1.3" />
              </g>
            </svg>
            页面样式
          </ToolButton>
        </QuickTools>
        <Tools>
          <ToolButton $gap={14}>
            <svg width="20" height="20" viewBox="0 0 20 20" fill="none" stroke="currentColor" strokeWidth="1.5">
              <rect x="1" y="2" width="7" height="5" />
              <rect x="11.5" y="2" width="7" height="5" />
              <rect x="1" y="10.5" width="7" height="7" />
              <rect x="11.5" y="10.5" width="6" height="6" />
            </svg>
            <ToolText>组件模板<Chevron /></ToolText>
          </ToolButton>
          <ToolButton $gap={14}>
            <svg width="20" height="20" viewBox="0 0 20 20" fill="none" stroke="currentColor" strokeWidth="1.5">
              <path d="M15 19H1V1h8.500l4.500 6v4M9.500 1v6H14M9 13.500h10M16 10.500l3 3-3 3" />
            </svg>
            <ToolText>导出<Chevron /></ToolText>
          </ToolButton>
          <ToolButton $gap={14}>
            <svg width="20" height="20" viewBox="0 0 20 20" fill="none" stroke="currentColor" strokeWidth="1.5">
              <path d="M18 2H1l1 3 4 4.500V16l4 2.500V9l2-3.500h5.500M12 9h4.500M12 12h3" />
            </svg>
            <ToolText>筛选栏<Chevron up /></ToolText>
          </ToolButton>
          <ToolButton $gap={14}>
            <ToolText>更多<Chevron /></ToolText>
          </ToolButton>
        </Tools>
        <Actions>
          <ActionButton>重置</ActionButton>
          <SplitButton>
            <ActionButton>新建卡片</ActionButton>
            <ActionButton $narrow aria-label="更多卡片选项"><Chevron /></ActionButton>
          </SplitButton>
          <ActionPair>
            <ActionButton>退出</ActionButton>
            <ActionButton $marked>发布</ActionButton>
          </ActionPair>
        </Actions>
      </Header>

      <FilterBar>
        <span>暂无筛选条件.</span>
        <FilterLink href="#create">点击创建</FilterLink>
        <span>或</span>
        <FilterLink href="#add">添加</FilterLink>
      </FilterBar>

      <Canvas>
        <CardTail />
        <Card>
          <DragHandle />
          <CardTools>
            <IconButton aria-label="全屏">
              <svg width="18" height="18" viewBox="0 0 18 18" fill="none" stroke="currentColor" strokeWidth="2">
                <path d="M7 7L2 2M11 7l5-5M7 11l-5 5M11 11l5 5" />
                <path fill="currentColor" stroke="none" d="M0 0h6L0 6zM18 0v6l-6-6zM0 18v-6l6 6zM18 18h-6l6-6z" />
              </svg>
            </IconButton>
            <IconButton aria-label="信息"><InfoIcon size={20} /></IconButton>
            <IconButton aria-label="导出表格">
              <svg width="20" height="20" viewBox="0 0 20 20" fill="none" stroke="currentColor" strokeWidth="1.7">
                <path d="M1 9V1h18v18h-8M1 5.500h18M10 5.500V9M12 12.500h7M12 9h7M0 14.500h9M6 10.500l4 4-4 4" />
              </svg>
            </IconButton>
            <IconButton aria-label="样式">
              <svg width="18" height="21" viewBox="0 0 18 21" fill="none" stroke="currentColor" strokeWidth="1.8">
                <rect x="1" y="1" width="13" height="6" rx="0.5" />
                <path d="M14 3.500h3V10H8v3" />
                <rect x="6.5" y="13" width="3" height="7" rx="1" />
              </svg>
            </IconButton>
            <IconButton aria-label="更多操作">
              <svg width="16" height="4" viewBox="0 0 16 4" fill="currentColor">
                <circle cx="2" cy="2" r="1.7" />
                <circle cx="8" cy="2" r="1.7" />
                <circle cx="14" cy="2" r="1.7" />
              </svg>
            </IconButton>
          </CardTools>
          <CardHeader>
            <CardLogo />
            <CardTitle>国家数值分布</CardTitle>
          </CardHeader>
          <MapFigure><WorldMap /></MapFigure>
          <Legend>
            <span>数值(求和):1</span>
            <Swatches>
              {["1", "2", "3", "4", "5"].map((t) => <Swatch key={t} $color={TONES[t]} />)}
            </Swatches>
            <span>223</span>
          </Legend>
          <ResizeGrip />
        </Card>
      </Canvas>
    </Page>
  );
}
